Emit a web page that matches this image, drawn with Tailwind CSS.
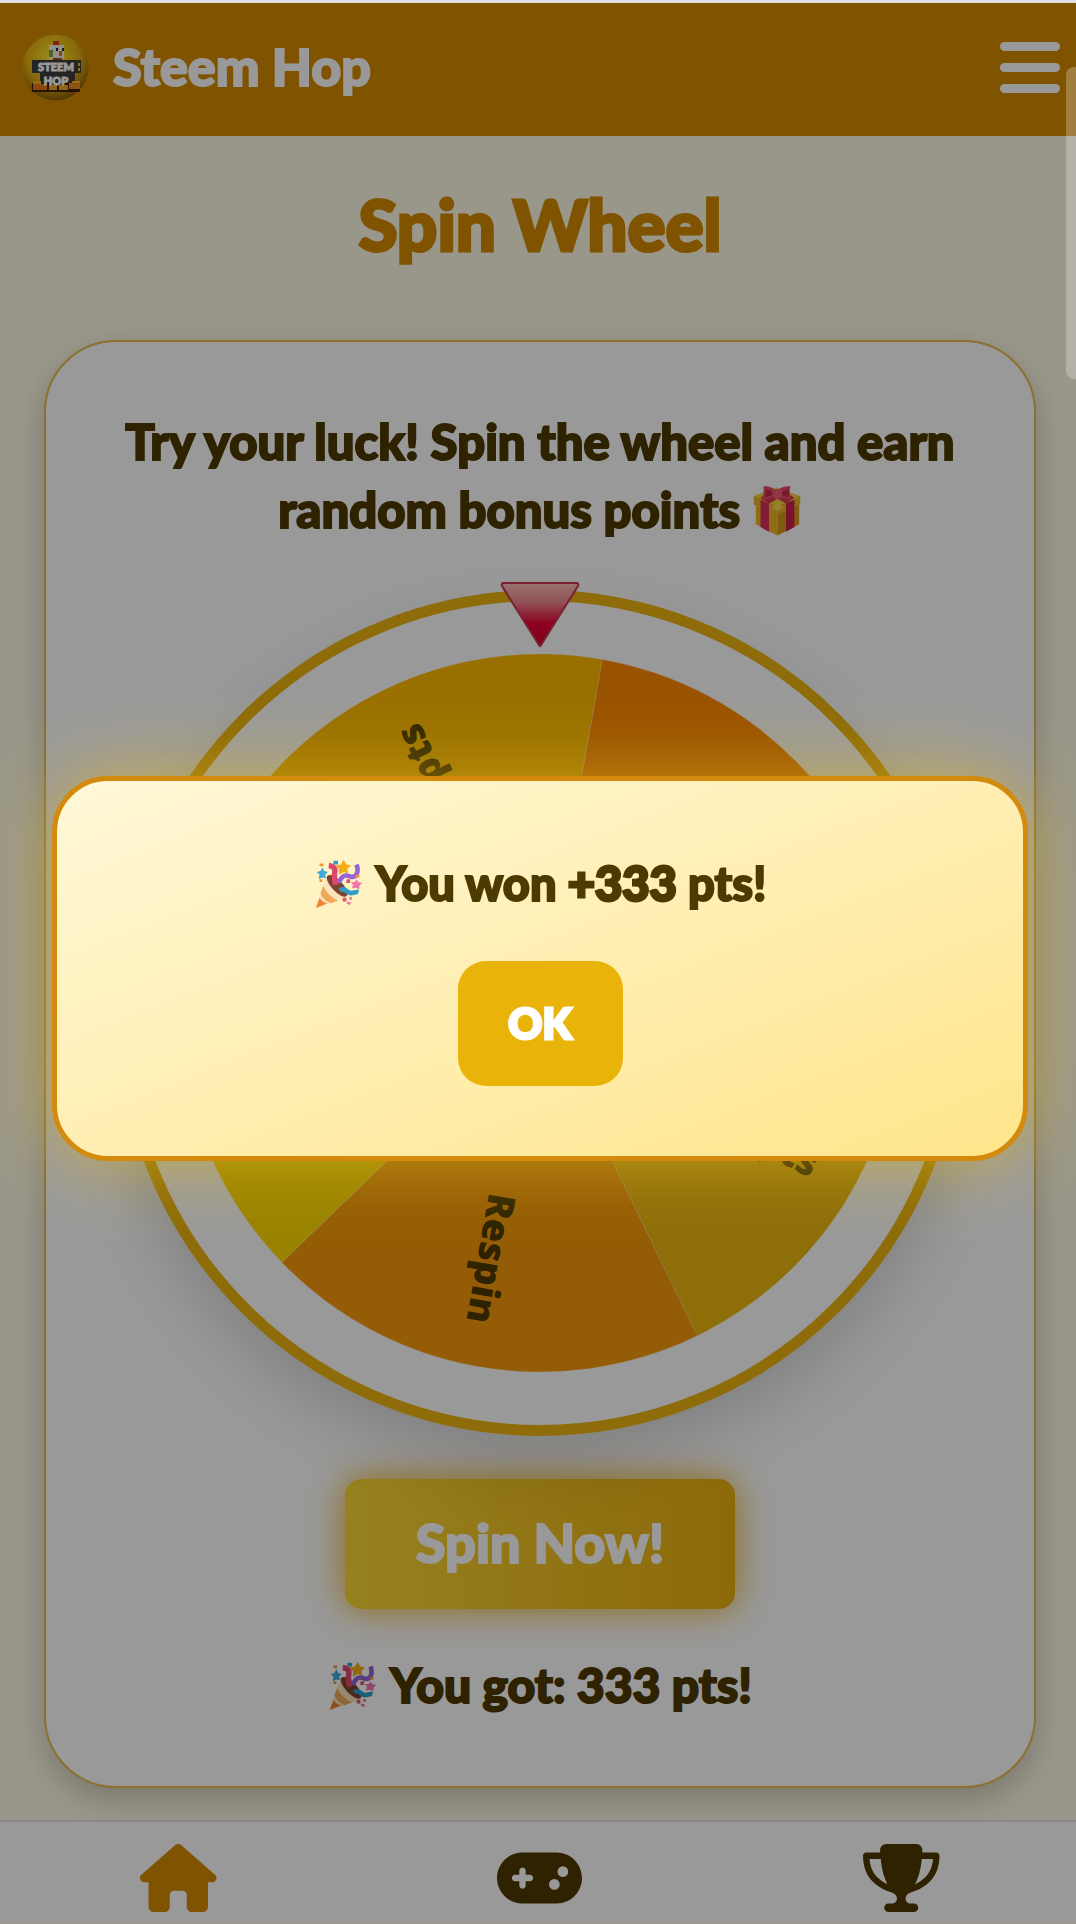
<!DOCTYPE html>
<html lang="en">
<head>
  <meta charset="UTF-8" />
  <meta name="viewport" content="width=device-width, initial-scale=1.0" />
  <title>Steem Hop - Spin Wheel</title>
  <script src="https://cdn.jsdelivr.net/npm/@tailwindcss/browser@4"></script>
</head>
<body class="-mr-1 overflow-x-hidden bg-[#fffbe6] text-[#4d3a00] font-['Lato',sans-serif] font-black">
  <!-- Shared emoji artwork -->
  <svg class="hidden">
    <symbol id="popper" viewBox="4 4 54 58">
      <path d="M18 25 6 60l34-12C36 38 28 30 18 25z" fill="#fbe3bd" />
      <path d="M14 36c3 7 9 13 16 16l-8 3C16 52 12 48 11 44z" fill="#f0a95a" />
      <path d="M10 49c2 3 5 6 9 6L6 60z" fill="#ee8430" />
      <ellipse cx="29" cy="36" rx="6" ry="15" transform="rotate(-43 29 36)" fill="#7c4430" />
      <path d="M20 14c8 1 7 6 6 10 0 4 1 7 1 11" fill="none" stroke="#dd466f" stroke-width="6" />
      <path d="M31 33c3-9 8-9 12-7 6 2 10-4 7-13" fill="none" stroke="#9663d4" stroke-width="5" />
      <path d="M32 41c5-4 8 3 12 3 3 0 5-2 8-1" fill="none" stroke="#309cc8" stroke-width="5" />
      <path d="m36 8 3 5 5 1-4 4 1 5-5-2-5 3v-6l-4-4 6-1z" fill="#f3ae18" />
      <path d="m13 16 2 4 4 1-3 3 1 4-4-1-4 2 1-5-3-3 4-1z" fill="#3fa9de" />
      <path d="m50 29 2 3 4 1-3 3v4l-4-2-4 1 1-4-2-3h4z" fill="#ee78ad" />
      <path d="M25 9h5v4h-5z" fill="#2d9fcf" />
      <path d="M10 12h4v3h-4zM10 29h3v3h-3zM49 24h4v3h-4z" fill="#e9963a" />
      <path d="M39 29h4v4h-4zM35 49h4v4h-4z" fill="#e2556a" />
      <path d="M42 48h3v3h-3zM40 53l4 1-1 3-4-2z" fill="#ee78ad" />
    </symbol>
    <symbol id="gift" viewBox="6 6 53 56">
      <path d="M10 24 33 35v25L10 48z" fill="#f0b424" />
      <path d="M56 24 33 35v25l23-12z" fill="#d89a18" />
      <path d="m8 18 24-9 25 9v9L33 37 8 27z" fill="#f8d040" />
      <path d="M33 29v8L8 27v-9zM33 29l24-11v9L33 37z" fill="#eab428" />
      <path d="m15 22 9 4v30l-9-5z" fill="#d8305a" />
      <path d="m51 22-9 4v30l9-5z" fill="#c8244c" />
      <path d="m15 20 8-5h20l8 5-9 6-9-5-9 5z" fill="#d8344f" />
      <path d="m33 26 6 4-6 4-6-4z" fill="#f8d65a" />
      <path d="M32 13C28 9 23 7 18 8c1 5 0 9-1 14 5 0 10-1 15-4 5 3 10 4 16 4-2-5-3-9-1-14-5-1-11 1-15 5z" fill="#e84868" />
      <path d="M21 11c3 1 6 2 8 5-3 2-6 3-9 3zM45 11c-4 1-7 2-9 5 3 2 6 3 9 3z" fill="#c8284c" />
      <rect x="28" y="11" width="10" height="10" rx="4" fill="#f45a74" />
    </symbol>
  </svg>

  <div class="h-[3px] relative z-50 bg-[#dfdfe5]"></div>

  <header class="flex items-center justify-between h-[133px] pl-[22px] pr-5 pb-1 bg-[#d48a00] text-white">
    <a href="#" class="flex items-center gap-6">
      <svg class="size-[67px]" viewBox="0 0 67 67" aria-hidden="true">
        <defs>
          <radialGradient id="ball" cx=".45" cy=".35" r=".65">
            <stop offset="0" stop-color="#fff02c" />
            <stop offset=".6" stop-color="#e4b010" />
            <stop offset="1" stop-color="#8f5f08" />
          </radialGradient>
        </defs>
        <circle cx="33.500" cy="33.500" r="33" fill="url(#ball)" />
        <path d="M31 7h6v5h-6z" fill="#d43820" />
        <path d="M27 11h15v14H27z" fill="#f4efdf" />
        <path d="M27 16h4v7h-4z" fill="#7fa553" />
        <path d="M34 14h2v3h-2zM40 14h2v3h-2z" fill="#222" />
        <path d="M37 17h3v5h-3z" fill="#e8721c" />
        <path d="M31 24h9v3h-9z" fill="#a8481c" />
        <path d="M10 26h49v13h-6v12H18V39h-8z" fill="#3c3c3e" />
        <path d="M56 29h2v3h-2zM56 34h2v3h-2z" fill="#e2c23a" />
        <path d="M10 49h48v9H10z" fill="#40200a" />
        <path d="M11 50h14v6H11z" fill="#e87818" />
        <path d="M27 51h8v5h-8zM37 51h9v5h-9z" fill="#f4a824" />
        <path d="M47 49h11v6H47z" fill="#ea8a1c" />
        <path d="M11 47h8v3h-8zM50 47h8v2h-8z" fill="#ffb42c" />
        <g font-size="11" text-anchor="middle" fill="#fff" stroke="#fff" stroke-width="1">
          <text x="34" y="37">STEEM</text>
          <text x="34" y="51">HOP</text>
        </g>
      </svg>
      <span class="pb-1 text-[52px] leading-none [-webkit-text-stroke:2px_#fff]">Steem Hop</span>
    </a>
    <button type="button" aria-label="Menu" class="flex flex-col gap-3">
      <span class="block w-[60px] h-[9px] rounded-full bg-white"></span>
      <span class="block w-[60px] h-[9px] rounded-full bg-white"></span>
      <span class="block w-[60px] h-[9px] rounded-full bg-white"></span>
    </button>
  </header>

  <main class="px-11 pt-12 pb-8">
    <h1 class="text-[71px] leading-[80px] text-center text-[#d48a00] [-webkit-text-stroke:3px_#d48a00]">Spin Wheel</h1>

    <section class="flex flex-col items-center mt-[76px] px-6 pt-[65px] pb-[67px] rounded-[72px] border-2 border-[#e8bb4e] bg-white shadow-[0_12px_30px_rgba(0,0,0,0.2)]">
      <p class="max-w-[880px] text-[49px] leading-[68px] text-center [-webkit-text-stroke:2px_#4d3a00]">
        Try your luck! Spin the wheel and earn random bonus points
        <svg class="inline-block w-[50px] h-[54px] align-[-10px]" role="img" aria-label="gift"><use href="#gift" /></svg>
      </p>

      <!-- Wheel -->
      <div class="relative mt-[47px] size-[846px] rounded-full border-[11px] border-[#ebb40f] shadow-[0_30px_60px_rgba(0,0,0,0.15)]">
        <svg id="wheel" class="w-full" viewBox="-412 -412 824 824" font-size="38" font-weight="900" font-family="Noto Sans, sans-serif" text-anchor="end"></svg>
        <svg class="absolute left-1/2 -translate-x-1/2 -top-5 w-20" viewBox="0 0 80 68" aria-hidden="true">
          <defs>
            <linearGradient id="pin" x2="0" y2="1">
              <stop offset="0" stop-color="#ffc0ba" />
              <stop offset=".3" stop-color="#f08a90" />
              <stop offset=".65" stop-color="#ea0035" />
              <stop offset="1" stop-color="#d8002c" />
            </linearGradient>
          </defs>
          <path d="M3 2h74q2 1 1 3L41 64q-1 2-2 0L2 5q-1-2 1-3z" fill="url(#pin)" stroke="#c93450" stroke-width="2" />
        </svg>
      </div>

      <button type="button" class="mt-[43px] w-[390px] h-[130px] pb-1 rounded-2xl bg-linear-to-r from-[#fbd635] to-[#eab00c] text-white text-[54px] [-webkit-text-stroke:2px_#fff] shadow-[0_0_36px_rgba(234,170,8,0.9)]">Spin Now!</button>

      <p class="flex items-center gap-3 mt-[42px] text-[48px] leading-[68px] [-webkit-text-stroke:2px_#4d3a00]">
        <svg class="w-[50px] h-[54px]" role="img" aria-label="party"><use href="#popper" /></svg>
        You got: 333 pts!
      </p>
    </section>
  </main>

  <nav class="flex justify-around items-end h-[102px] pb-[10px] border-t-2 border-[#e4e2e6] bg-white">
    <a href="#" aria-label="Home" class="text-[#d48a00]">
      <svg class="h-[68px]" viewBox="0 0 576 512" fill="currentColor"><path d="M575.800 255.500c0 18-15 32.100-32 32.100l-32 0 .7 160.200c0 2.700-.2 5.400-.5 8.100l0 16.200c0 22.100-17.900 40-40 40l-16 0c-1.100 0-2.200 0-3.300-.1c-1.400 .1-2.800 .1-4.200 .1L416 512l-24 0c-22.100 0-40-17.900-40-40l0-24 0-64c0-17.700-14.300-32-32-32l-64 0c-17.700 0-32 14.300-32 32l0 64 0 24c0 22.100-17.900 40-40 40l-24 0-31.900 0c-1.500 0-3-.1-4.500-.2c-1.200 .1-2.400 .2-3.600 .2l-16 0c-22.100 0-40-17.900-40-40l0-112c0-.9 0-1.900 .1-2.800l0-69.700-32 0c-18 0-32-14-32-32.100c0-9 3-17 10-24L266.400 8c7-7 15-8 22-8s15 2 21 7L564.800 231.500c8 7 12 15 11 24z" /></svg>
    </a>
    <a href="#" aria-label="Games">
      <svg class="h-[68px]" viewBox="0 0 640 512" fill="currentColor"><path d="M192 64C86 64 0 150 0 256S86 448 192 448l256 0c106 0 192-86 192-192s-86-192-192-192L192 64zM496 168a40 40 0 1 1 0 80 40 40 0 1 1 0-80zM392 304a40 40 0 1 1 80 0 40 40 0 1 1 -80 0zM168 200c0-13.300 10.700-24 24-24s24 10.700 24 24l0 32 32 0c13.300 0 24 10.700 24 24s-10.700 24-24 24l-32 0 0 32c0 13.300-10.700 24-24 24s-24-10.700-24-24l0-32-32 0c-13.300 0-24-10.700-24-24s10.700-24 24-24l32 0 0-32z" /></svg>
    </a>
    <a href="#" aria-label="Leaderboard">
      <svg class="h-[68px]" viewBox="0 0 576 512" fill="currentColor"><path d="M400 0L176 0c-26.500 0-48.100 21.800-47.100 48.200c.2 5.300 .4 10.600 .7 15.800L24 64C10.700 64 0 74.700 0 88c0 92.600 33.500 157 78.500 200.700c44.300 43.100 98.300 64.800 138.100 75.800c23.400 6.500 39.400 26 39.400 45.600c0 20.900-17 37.900-37.900 37.900L192 448c-17.700 0-32 14.300-32 32s14.300 32 32 32l192 0c17.700 0 32-14.300 32-32s-14.300-32-32-32l-26.100 0C337 448 320 431 320 410.100c0-19.600 15.900-39.200 39.400-45.600c39.900-11 93.900-32.700 138.200-75.800C542.500 245 576 180.600 576 88c0-13.300-10.700-24-24-24L446.400 64c.3-5.200 .5-10.400 .7-15.800C448.100 21.800 426.500 0 400 0zM48.900 112l84.400 0c9.100 90.100 29.200 150.300 51.900 190.600c-24.900-11-50.800-26.500-73.200-48.300c-32-31.100-58-76-63-142.300zM464.100 254.300c-22.400 21.800-48.300 37.300-73.200 48.300c22.700-40.300 42.800-100.500 51.900-190.600l84.400 0c-5.100 66.300-31.100 111.200-63 142.300z" /></svg>
    </a>
  </nav>

  <!-- Modal -->
  <div id="winModal" class="fixed inset-y-0 left-0 -right-1 z-40 flex items-center justify-center px-[52px] pt-3 bg-black/40">
    <div class="w-full flex flex-col items-center pt-[68px] pb-[70px] rounded-[56px] border-[5px] border-[#d48a0c] bg-linear-to-br from-[#fff8d8] to-[#ffe58a] shadow-[0_0_72px_rgba(234,190,30,0.6)]">
      <p class="flex items-center gap-3 text-[47px] leading-[68px] [-webkit-text-stroke:2px_#4d3a00]">
        <svg class="w-[50px] h-[54px]" role="img" aria-label="party"><use href="#popper" /></svg>
        <span>You won <b class="font-black [-webkit-text-stroke:3px_#4d3a00]">+333</b> pts!</span>
      </p>
      <button type="button" onclick="closeModal()" class="mt-11 w-[165px] h-[125px] rounded-[28px] bg-[#eab30a] text-white text-[42px] [-webkit-text-stroke:3px_#fff]">OK</button>
    </div>
  </div>

  <!-- Side panel handle -->
  <div class="fixed right-0 top-[67px] z-50 w-[10px] h-[312px] rounded-l-lg bg-white/25"></div>

  <script>
    const sectors = [
      { label: "50 pts", color: "#ff8a00" },
      { label: "100 pts", color: "#ecb710" },
      { label: "Respin", color: "#f79a0a" },
      { label: "10 pts", color: "#fdd900" },
      { label: "333 pts", color: "#ffbb00" },
    ];
    const radius = 359;
    const start = -80;
    const step = 360 / sectors.length;

    function point(deg) {
      const a = deg * Math.PI / 180;
      return (radius * Math.cos(a)).toFixed(1) + " " + (radius * Math.sin(a)).toFixed(1);
    }

    document.getElementById("wheel").innerHTML = sectors.map((s, i) => {
      const from = start + i * step;
      return `<path d="M0 0L${point(from)}A${radius} ${radius} 0 0 1 ${point(from + step)}z" fill="${s.color}" stroke="#fff" stroke-opacity="0.2" />
        <text x="316" y="19" transform="rotate(${from + step / 2})" fill="#4d3a00">${s.label}</text>`;
    }).join("");

    function closeModal() {
      document.getElementById("winModal").classList.add("hidden");
    }
  </script>
</body>
</html>
